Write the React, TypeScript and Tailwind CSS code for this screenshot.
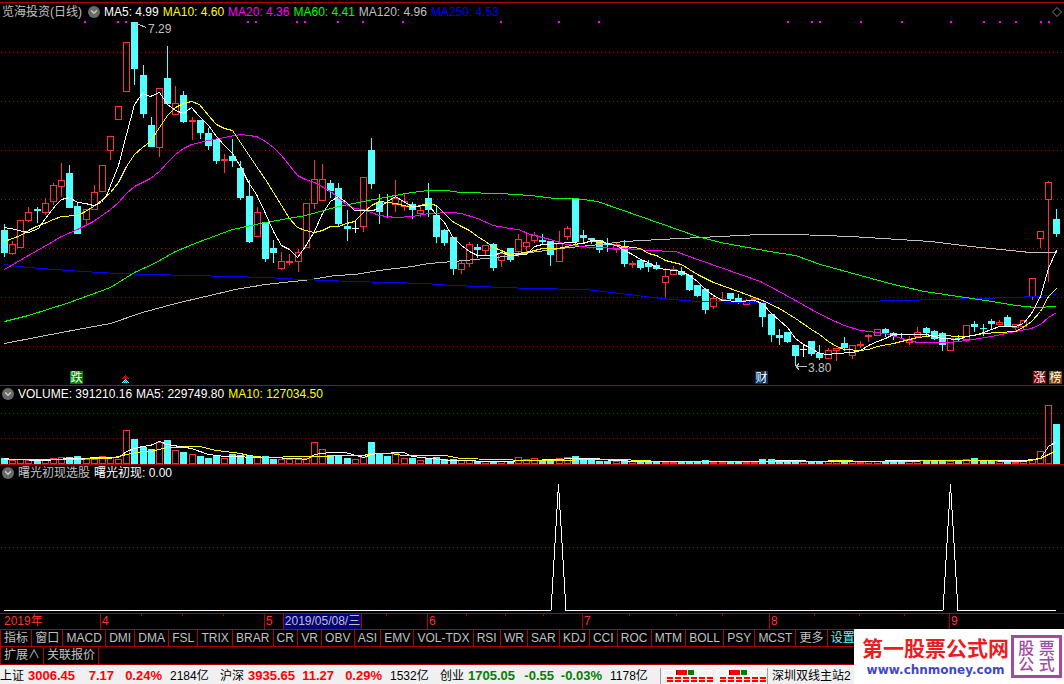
import type { ReactNode } from "react";
import { ChevronDown } from "lucide-react";

// up = hollow red, down = solid cyan, flat = white cross
type Kind = "r" | "c" | "w";

// [kind, high, bodyTop, bodyBottom, low, volumeTop]
type Candle = [Kind, number, number, number, number, number];

const CANDLES: Candle[] = [
	["c", 224, 230, 253, 257, 458],
	["r", 241, 244, 254, 255, 460],
	["r", 220, 220, 248, 248, 459],
	["r", 207, 212, 221, 222, 460],
	["c", 207, 209, 211, 223, 459],
	["r", 198, 203, 213, 215, 459],
	["r", 183, 185, 202, 205, 458],
	["r", 163, 180, 187, 197, 457],
	["c", 165, 173, 208, 208, 457],
	["c", 202, 206, 234, 234, 456],
	["r", 209, 209, 220, 226, 459],
	["r", 185, 192, 210, 210, 459],
	["r", 165, 165, 192, 192, 456],
	["r", 136, 136, 151, 160, 457],
	["r", 106, 106, 120, 120, 459],
	["r", 42, 42, 92, 92, 430],
	["c", 22, 22, 69, 85, 439],
	["c", 65, 75, 114, 118, 447],
	["c", 117, 125, 147, 147, 449],
	["r", 88, 88, 148, 157, 442],
	["c", 46, 78, 104, 104, 440],
	["r", 86, 103, 115, 115, 450],
	["c", 91, 95, 122, 123, 452],
	["r", 117, 120, 122, 140, 454],
	["c", 120, 120, 133, 139, 456],
	["c", 128, 133, 146, 150, 458],
	["c", 139, 139, 161, 164, 455],
	["r", 154, 159, 161, 173, 458],
	["c", 139, 156, 161, 167, 454],
	["c", 161, 168, 198, 200, 455],
	["c", 180, 196, 242, 243, 456],
	["r", 207, 212, 237, 237, 456],
	["c", 222, 222, 259, 262, 456],
	["c", 240, 248, 253, 263, 459],
	["r", 252, 261, 269, 270, 459],
	["r", 254, 261, 263, 265, 459],
	["r", 249, 252, 262, 272, 459],
	["r", 203, 203, 248, 248, 458],
	["r", 160, 179, 204, 209, 442],
	["r", 164, 179, 201, 201, 449],
	["c", 180, 183, 191, 198, 455],
	["c", 183, 188, 224, 227, 455],
	["c", 210, 226, 229, 241, 458],
	["w", 220, 228, 229, 233, 459],
	["r", 177, 177, 227, 232, 457],
	["c", 138, 150, 184, 189, 442],
	["c", 194, 202, 212, 224, 454],
	["c", 194, 202, 203, 218, 456],
	["r", 180, 198, 205, 212, 453],
	["r", 193, 201, 207, 211, 458],
	["c", 202, 204, 210, 219, 458],
	["r", 205, 210, 214, 217, 460],
	["c", 183, 198, 210, 217, 458],
	["c", 206, 215, 237, 243, 457],
	["c", 229, 230, 243, 246, 459],
	["c", 237, 237, 269, 275, 459],
	["r", 261, 263, 270, 274, 460],
	["r", 242, 244, 264, 267, 460],
	["c", 244, 247, 250, 258, 461],
	["r", 245, 245, 251, 255, 461],
	["c", 243, 244, 268, 271, 461],
	["r", 251, 253, 261, 267, 461],
	["c", 248, 248, 260, 262, 461],
	["r", 234, 239, 252, 257, 457],
	["r", 233, 242, 247, 252, 459],
	["r", 232, 235, 241, 243, 458],
	["c", 234, 240, 242, 244, 460],
	["c", 241, 241, 255, 266, 460],
	["r", 231, 243, 262, 262, 458],
	["r", 226, 228, 237, 240, 457],
	["c", 198, 198, 242, 246, 456],
	["c", 230, 235, 238, 242, 459],
	["c", 238, 238, 240, 244, 459],
	["c", 240, 240, 250, 253, 461],
	["c", 238, 244, 245, 252, 461],
	["r", 242, 244, 250, 253, 461],
	["c", 240, 247, 264, 267, 460],
	["r", 261, 263, 265, 268, 461],
	["c", 259, 260, 268, 270, 461],
	["c", 260, 263, 267, 272, 461],
	["c", 262, 265, 269, 270, 461],
	["r", 268, 276, 283, 297, 462],
	["r", 266, 269, 275, 275, 462],
	["c", 267, 271, 275, 276, 461],
	["c", 275, 275, 290, 291, 461],
	["c", 285, 285, 296, 297, 461],
	["c", 288, 289, 310, 314, 460],
	["r", 295, 298, 307, 309, 462],
	["r", 292, 299, 301, 302, 462],
	["c", 293, 293, 299, 301, 461],
	["c", 294, 298, 302, 304, 461],
	["r", 299, 300, 305, 305, 462],
	["r", 298, 298, 300, 302, 462],
	["c", 302, 302, 317, 327, 459],
	["c", 314, 314, 335, 342, 459],
	["c", 329, 335, 338, 345, 461],
	["c", 332, 332, 342, 343, 461],
	["c", 345, 345, 356, 366, 461],
	["w", 345, 349, 350, 357, 461],
	["c", 341, 341, 354, 356, 461],
	["c", 345, 353, 358, 360, 461],
	["r", 348, 350, 359, 359, 461],
	["r", 348, 348, 351, 361, 461],
	["c", 337, 343, 348, 351, 461],
	["r", 345, 345, 356, 359, 461],
	["r", 341, 344, 346, 348, 462],
	["r", 334, 335, 337, 342, 461],
	["r", 329, 329, 336, 336, 461],
	["c", 328, 329, 333, 337, 461],
	["c", 332, 333, 336, 340, 461],
	["c", 333, 334, 335, 338, 461],
	["r", 336, 339, 343, 345, 461],
	["r", 327, 332, 337, 337, 460],
	["c", 327, 328, 333, 336, 460],
	["c", 330, 331, 339, 340, 460],
	["c", 332, 333, 345, 351, 461],
	["r", 338, 338, 351, 351, 461],
	["c", 335, 338, 339, 341, 461],
	["r", 325, 325, 340, 342, 459],
	["c", 321, 324, 327, 332, 458],
	["c", 324, 328, 329, 336, 461],
	["c", 319, 321, 324, 330, 460],
	["r", 320, 322, 325, 325, 461],
	["c", 315, 317, 326, 326, 460],
	["r", 324, 324, 328, 330, 462],
	["r", 320, 320, 327, 329, 461],
	["r", 278, 278, 297, 300, 459],
	["r", 231, 231, 239, 248, 451],
	["r", 181, 182, 200, 282, 405],
	["c", 209, 219, 234, 237, 424],
];

const candleX = (i: number) => Math.round(4 + i * 8.155);

const COLORS: Record<Kind, string> = {
	r: "#ff3232",
	c: "#54ffff",
	w: "#ffffff",
};

const PRICE_LINES = [
	{
		color: "#c0c0c0",
		points:
			"4,343 40,336 77,329 110,323 142,312 175,303 205,296 235,289 265,284 311,279 335,275 355,274 378,270 412,266 428,263 465,260 505,256 530,252 560,248 600,244 624,241 660,239 700,237 760,234 795,234 850,236 930,241 970,246 1000,249 1030,252 1056,252",
	},
	{
		color: "#0000ff",
		points:
			"4,264 18,266 40,268 83,271 117,273 150,274 230,276 265,277 302,279 351,281 425,283 452,285 530,288 585,289 620,293 660,298 697,301 750,302 795,301 860,301 900,300 940,299 980,298 1040,296 1056,294",
	},
	{
		color: "#00ff00",
		points:
			"4,321 28,315 69,302 110,287 134,272 154,263 175,251 197,242 232,229 265,222 305,215 338,206 363,201 400,194 412,192 428,190 446,190 460,192 500,193 530,195 555,198 575,198 597,201 620,209 660,223 697,236 720,242 775,252 795,255 820,264 860,275 893,284 924,291 958,296 985,300 1015,305 1035,307 1056,306",
	},
	{
		color: "#ff00ff",
		points:
			"4,269 28,255 44,246 61,236 77,229 93,221 110,209 118,202 126,193 134,186 142,182 150,178 159,171 167,162 175,154 183,148 191,144 208,140 224,137 240,134 256,136 265,141 273,147 281,155 289,165 297,175 305,179 314,182 330,191 346,204 354,208 363,209 379,215 395,217 412,216 428,213 452,212 461,213 477,218 493,225 509,228 518,229 530,234 550,239 566,244 590,247 624,248 648,250 675,251 700,260 740,274 760,281 775,289 795,300 811,309 828,318 844,325 860,330 885,333 901,338 917,342 950,342 966,340 991,336 1015,331 1031,328 1040,324 1048,317 1056,312",
	},
	{
		color: "#ffff00",
		points:
			"4,241 12,238 20,235 28,230 36,226 44,223 53,219 61,216 77,215 85,211 93,206 101,200 110,192 118,182 126,166 134,154 142,147 150,141 159,127 167,115 175,107 183,103 191,101 199,104 208,115 216,124 224,128 232,130 240,142 248,154 256,166 265,179 273,192 281,205 289,218 297,227 305,230 314,232 322,230 330,226 338,226 346,223 354,221 363,212 371,205 379,201 395,203 403,205 412,207 420,205 428,203 436,205 444,213 452,221 461,226 469,230 477,236 485,241 493,247 501,250 509,254 518,253 530,251 542,248 558,248 575,244 590,241 603,242 616,245 640,248 648,253 656,255 665,260 681,264 697,274 713,282 738,291 762,300 779,308 795,318 811,329 819,334 828,341 836,346 844,349 860,350 868,349 877,346 893,343 901,341 917,337 934,335 966,336 983,333 1015,331 1024,326 1031,321 1040,311 1048,296 1056,288",
	},
	{
		color: "#ffffff",
		points:
			"4,227 15,229 22,231 28,232 38,228 45,218 55,205 61,199 69,197 77,202 85,203 93,205 101,202 107,193 112,180 118,165 126,134 134,104 142,93 150,96 159,92 167,104 175,110 183,113 191,107 199,116 208,125 216,136 224,145 232,153 240,166 248,182 256,194 265,213 273,231 281,245 289,249 297,257 305,246 314,231 322,213 330,201 338,196 346,202 354,210 373,210 379,207 387,201 395,196 403,201 412,206 428,205 436,214 444,222 452,236 461,245 469,251 477,255 493,255 501,252 509,255 526,254 534,246 542,244 558,243 570,242 583,243 591,240 599,240 607,243 616,245 624,250 632,254 640,259 648,262 656,267 665,269 681,271 689,275 697,281 705,289 713,295 722,300 738,301 754,300 762,303 770,312 779,320 787,327 795,338 803,344 811,348 819,353 828,354 836,353 852,352 860,350 868,345 877,341 885,338 893,334 926,334 934,336 942,338 958,339 966,336 974,335 983,332 991,329 999,326 1015,326 1023,323 1031,313 1040,296 1048,268 1056,250",
	},
];

const VOLUME_LINES = [
	{
		color: "#ffffff",
		points:
			"4,458 12,459 45,460 69,458 110,457 118,457 126,451 134,448 142,446 150,445 159,441 167,444 191,448 208,454 224,456 265,457 297,458 306,459 314,454 330,452 345,452 352,454 363,457 371,454 379,453 403,452 412,456 430,458 450,460 500,461 530,460 575,458 595,458 612,460 640,461 760,461 790,460 820,461 950,460 1024,460 1040,458 1048,446 1056,441",
	},
	{
		color: "#ffff00",
		points:
			"4,459 60,459 110,458 126,454 142,451 150,451 167,447 199,446 216,450 240,453 248,455 265,457 300,456 363,455 371,453 390,453 403,455 445,455 460,458 495,459 530,460 620,459 660,461 820,461 835,460 870,461 970,460 1024,461 1040,458 1048,454 1056,450",
	},
];

const SIGNAL_DOTS = [
	84, 117, 125, 247, 255, 296, 304, 337, 362, 402, 500, 558, 598, 787, 811,
	819, 860, 901, 950, 983, 999, 1015, 1040, 1048,
];

const MONTHS: { label: string; width: number; ticks: number[] }[] = [
	{ label: "2019年", width: 100, ticks: [] },
	{ label: "4", width: 164, ticks: [41, 82, 123] },
	{ label: "5", width: 163, ticks: [122] },
	{ label: "6", width: 155, ticks: [39, 78, 116] },
	{ label: "7", width: 187, ticks: [47, 94, 140] },
	{ label: "8", width: 180, ticks: [45, 90, 135] },
	{ label: "9", width: 115, ticks: [] },
];

const INDICATORS = [
	"指标", "窗口", "MACD", "DMI", "DMA", "FSL", "TRIX", "BRAR", "CR", "VR",
	"OBV", "ASI", "EMV", "VOL-TDX", "RSI", "WR", "SAR", "KDJ", "CCI", "ROC",
	"MTM", "BOLL", "PSY", "MCST", "更多", "设置",
];

const MARKETS = [
	{ name: "上证", value: "3006.45", change: "7.17", pct: "0.24%", turnover: "2184亿", tone: "text-[#ff0000]" },
	{ name: "沪深", value: "3935.65", change: "11.27", pct: "0.29%", turnover: "1532亿", tone: "text-[#ff0000]" },
	{ name: "创业", value: "1705.05", change: "-0.55", pct: "-0.03%", turnover: "1178亿", tone: "text-[#008000]" },
];

function Plot({ top, height, className, children }: {
	top: number;
	height: number;
	className: string;
	children: ReactNode;
}) {
	return (
		<svg
			className={`block w-full ${className}`}
			viewBox={`0 ${top} 1064 ${height}`}
			preserveAspectRatio="none"
			shapeRendering="crispEdges"
			fill="none"
		>
			{children}
		</svg>
	);
}

function GridLine({ y }: { y: number }) {
	return (
		<line x1={1} x2={1064} y1={y + 0.5} y2={y + 0.5} stroke="#b00000" strokeDasharray="1 3" />
	);
}

function Lines({ lines }: { lines: { color: string; points: string }[] }) {
	return (
		<g transform="translate(0.5 0.5)">
			{lines.map((line) => (
				<polyline key={line.color} points={line.points} stroke={line.color} />
			))}
		</g>
	);
}

function Toggle({ label }: { label: string }) {
	return (
		<button
			aria-label={label}
			className="flex size-3 shrink-0 items-center justify-center rounded-full bg-[#6a6a6a] text-[#d0d0d0]"
		>
			<ChevronDown className="size-[10px]" strokeWidth={3} />
		</button>
	);
}

// small dithered triangle, tip at (x, y)
function Marker({ x, y, base, dot }: { x: number; y: number; base: string; dot: string }) {
	return (
		<g>
			{[0, 1, 2, 3].map((row) => (
				<g key={row}>
					<rect x={x - row} y={y + row} width={row * 2 + 1} height={1} fill={base} />
					{Array.from({ length: row + 1 }, (_, n) => (
						<rect key={n} x={x - row + n * 2} y={y + row} width={1} height={1} fill={dot} />
					))}
				</g>
			))}
		</g>
	);
}

function PriceChart() {
	return (
		<Plot top={20} height={365} className="h-[365px]">
			{[52, 101, 150, 199, 248, 297, 346].map((y) => (
				<GridLine key={y} y={y} />
			))}
			{SIGNAL_DOTS.map((x) => (
				<rect key={x} x={x} y={21} width={2} height={2} fill="#ff00ff" />
			))}
			{CANDLES.map(([kind, high, top, bottom, low], i) => {
				const x = candleX(i);
				const color = COLORS[kind];
				const hollow = kind === "r" && bottom - top > 2;
				return (
					<g key={x}>
						<rect x={x} y={high} width={1} height={top - high} fill={color} />
						<rect x={x} y={bottom} width={1} height={low - bottom} fill={color} />
						{hollow ? (
							<rect x={x - 2.5} y={top + 0.5} width={6} height={bottom - top - 1} stroke={color} />
						) : (
							<rect x={x - 3} y={top} width={7} height={bottom - top} fill={color} />
						)}
					</g>
				);
			})}
			<Lines lines={PRICE_LINES} />
			{/* leader lines for the high and low labels */}
			<path d="M135 24.5h4l7 3M135 24.5v3M135 24.5l3-2" stroke="#c0c0c0" />
			<path d="M796 366.5h11M796 366.5l3-3M796 366.5l3 3" stroke="#c0c0c0" />
			<Marker x={125} y={375} base="#700000" dot="#ff0000" />
			<Marker x={125} y={379} base="#0070ff" dot="#54ffff" />
		</Plot>
	);
}

function VolumeChart() {
	return (
		<Plot top={402} height={62} className="h-[62px]">
			<GridLine y={413} />
			<GridLine y={438} />
			{CANDLES.map(([kind, , , , , top], i) => {
				const x = candleX(i);
				return kind === "c" ? (
					<rect key={x} x={x - 3} y={top} width={7} height={464 - top} fill={COLORS.c} />
				) : (
					<rect key={x} x={x - 2.5} y={top + 0.5} width={6} height={463 - top} stroke={COLORS.r} />
				);
			})}
			<Lines lines={VOLUME_LINES} />
		</Plot>
	);
}

function SignalChart() {
	return (
		<Plot top={481} height={132} className="h-[132px]">
			<GridLine y={547} />
			<polyline
				points="4,610.5 551,610.5 558.5,484 566,610.5 943,610.5 950.5,484 958,610.5 1056,610.5"
				stroke="#ffffff"
			/>
		</Plot>
	);
}

function Badge({ className, children }: { className: string; children: ReactNode }) {
	return (
		<span
			className={`absolute top-[371px] flex size-[13px] items-center justify-center text-xs leading-none text-white ${className}`}
		>
			{children}
		</span>
	);
}

function TimeAxis() {
	return (
		<div className="relative flex h-4 border-b border-[#b00000] text-xs leading-[15px] text-[#ff3232]">
			{MONTHS.map((month, i) => (
				<div
					key={month.label}
					className={`relative ${i === 0 ? "pl-1" : "border-l border-[#b00000] pl-px"}`}
					style={{ width: `${(month.width / 1064) * 100}%` }}
				>
					{month.label}
					<svg className="absolute inset-0 size-full" fill="#b00000">
						{month.ticks.map((x) => (
							<rect key={x} x={x - 1} y={0} width={1} height={2} />
						))}
					</svg>
				</div>
			))}
			{/* crosshair date */}
			<div className="absolute left-[283px] top-0 h-[15px] w-[79px] border-x border-[#b00000] bg-[#000080] text-center text-[#c0c0c0]">
				2019/05/08/三
			</div>
		</div>
	);
}

function Tab({ label }: { label: string }) {
	return (
		<button
			className={`border-r border-[#b00000] px-[3px] whitespace-nowrap ${label === "设置" ? "text-[#54ffff]" : ""}`}
		>
			{label}
		</button>
	);
}

function ConnectionMeter() {
	return (
		<svg className="h-4 w-[106px] shrink-0" shapeRendering="crispEdges">
			{[2, 55].map((x) => (
				<g key={x}>
					{[0, 12, 24, 37].map((dx) => (
						<rect key={dx} x={x + dx + 0.5} y={2.5} width={11} height={5} fill="#f0f0f0" stroke="#ffffff" />
					))}
					<rect x={x + 13} y={2} width={11} height={5} fill="#ff0000" />
					<rect x={x + 13} y={2} width={1} height={5} fill="#800000" />
					<rect x={x + 25} y={2} width={6} height={5} fill="#008000" />
					{[0, 1, 2, 3, 4, 5].map((n) => (
						<g key={n} fill="#ff0000">
							<rect x={x + 4 + n * 8} y={9} width={6} height={2} />
							<rect x={x + 4 + n * 8} y={12} width={6} height={2} />
						</g>
					))}
				</g>
			))}
		</svg>
	);
}

function StatusBar() {
	return (
		<footer className="flex h-[19px] items-center overflow-hidden border-t border-white bg-[#f0f0f0] pt-px text-xs leading-4 text-black">
			{MARKETS.map((m) => (
				<div key={m.name} className="flex w-[220px] shrink-0 whitespace-nowrap">
					<span className="w-7">{m.name}</span>
					<b className={`w-12 text-[13px] leading-4 ${m.tone}`}>{m.value}</b>
					<b className={`w-[38px] text-right text-[13px] leading-4 ${m.tone}`}>{m.change}</b>
					<b className={`w-12 text-right text-[13px] leading-4 ${m.tone}`}>{m.pct}</b>
					<span className="ml-2">{m.turnover}</span>
				</div>
			))}
			<div className="flex shrink-0 border-x border-[#a0a0a0]">
				<ConnectionMeter />
			</div>
			<span className="shrink-0 pl-1">深圳双线主站2</span>
		</footer>
	);
}

function SiteLogo() {
	return (
		<div className="absolute bottom-0 right-0 flex h-[55px] w-[210px] items-center justify-between bg-white pl-2 pr-[2px]">
			<div className="flex flex-col items-center">
				<span className="text-[21px] font-bold leading-[26px] text-[#ed1c24]">第一股票公式网</span>
				<span className="font-['DejaVu_Sans'] text-xs font-bold leading-4 text-[#3f48cc]">
					www.chnmoney.com
				</span>
			</div>
			<div className="flex h-[43px] w-[51px] flex-col items-center justify-center border-[3px] border-[#a349a4] text-base font-medium leading-4 text-[#a349a4]">
				<span>股 票</span>
				<span>公 式</span>
			</div>
		</div>
	);
}

export default function App() {
	return (
		<main className="relative overflow-hidden bg-black font-['Liberation_Sans','Noto_Sans_CJK_SC',sans-serif] text-xs text-[#c0c0c0]">
			<section className="relative border-b border-[#b00000]">
				<div className="h-[3px] border-b border-[#b00000]" />
				<header className="flex h-[17px] items-center gap-1 whitespace-nowrap pl-[2px]">
					<h1 className="pr-[2px]">览海投资(日线)</h1>
					<Toggle label="主图指标" />
					<span className="text-white">MA5: 4.99</span>
					<span className="text-[#ffff00]">MA10: 4.60</span>
					<span className="text-[#ff00ff]">MA20: 4.36</span>
					<span className="text-[#00ff00]">MA60: 4.41</span>
					<span>MA120: 4.96</span>
					<span className="text-[#0000ff]">MA250: 4.53</span>
					<svg className="mr-px ml-auto size-3" fill="none" stroke="#808080">
						<path d="M6 1.5L10.5 6L6 10.5L1.5 6Z" />
					</svg>
				</header>
				<PriceChart />
				<span className="absolute left-[148px] top-[21px]">7.29</span>
				<span className="absolute left-[808px] top-[360px]">3.80</span>
				<Badge className="left-[70px] bg-[#008000]">跌</Badge>
				<Badge className="left-[755px] bg-[#003366]">财</Badge>
				<Badge className="left-[1033px] bg-[#800000]">涨</Badge>
				<Badge className="left-[1049px] bg-[#804000]">榜</Badge>
			</section>

			<section className="border-b border-[#b00000]">
				<header className="flex h-4 items-center gap-1 whitespace-nowrap pl-[2px] text-white">
					<Toggle label="成交量" />
					<span>VOLUME: 391210.16</span>
					<span>MA5: 229749.80</span>
					<span className="text-[#ffff00]">MA10: 127034.50</span>
				</header>
				<VolumeChart />
			</section>

			<section className="border-b border-[#b00000]">
				<header className="flex h-4 items-center gap-1 whitespace-nowrap pl-[2px]">
					<Toggle label="选股公式" />
					<h2>曙光初现选股</h2>
					<span className="text-white">曙光初现: 0.00</span>
				</header>
				<SignalChart />
			</section>

			<TimeAxis />

			<nav className="border-b border-l border-[#b00000] leading-4">
				<div className="flex h-4 w-[858px] *:grow">
					{INDICATORS.map((name) => (
						<Tab key={name} label={name} />
					))}
				</div>
			</nav>
			<nav className="flex h-[18px] border-b border-l border-[#b00000] leading-[17px]">
				<Tab label="扩展∧" />
				<Tab label="关联报价" />
			</nav>

			<StatusBar />
			<SiteLogo />
		</main>
	);
}
